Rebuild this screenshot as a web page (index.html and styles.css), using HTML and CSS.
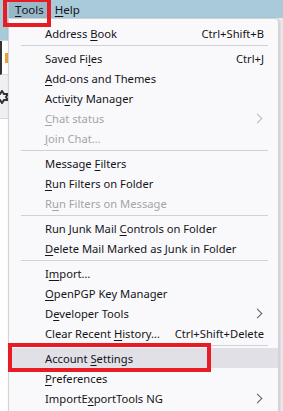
FILE: index.html
```html
<!DOCTYPE html>
<html lang="en">
<head>
  <meta charset="UTF-8">
  <title>Tools menu</title>
  <link rel="stylesheet" href="styles.css">
</head>
<body>
  <!-- menu bar -->
  <div class="menubar">
    <span class="menubar-item active"><u>T</u>ools</span>
    <span class="menubar-item"><u>H</u>elp</span>
  </div>

  <!-- window content behind the popup -->
  <div class="window">
    <div class="win-left">
      <div class="strip tabrow"></div>
      <div class="strip addr"><span class="orange"></span></div>
      <div class="strip toolbar">
        <svg class="gear" width="14" height="14" viewBox="0 0 14 14">
          <path d="M7 1 L9 4 L13 4 L11 7 L13 10 L9 10 L7 13 L5 10 L1 10 L3 7 L1 4 L5 4 Z" fill="none" stroke="#333" stroke-width="2"/>
        </svg>
      </div>
      <div class="strip blank"></div>
    </div>
    <div class="win-right"></div>
  </div>

  <!-- Tools popup -->
  <div class="menu">
    <div class="menu-item"><span>Address <u>B</u>ook</span><span class="key">Ctrl+Shift+B</span></div>
    <div class="menu-sep"></div>
    <div class="menu-item"><span>Saved Fi<u>l</u>es</span><span class="key">Ctrl+J</span></div>
    <div class="menu-item"><span><u>A</u>dd-ons and Themes</span></div>
    <div class="menu-item"><span>Acti<u>v</u>ity Manager</span></div>
    <div class="menu-item disabled"><span><u>C</u>hat status</span><span class="arrow"></span></div>
    <div class="menu-item disabled"><span><u>J</u>oin Chat…</span></div>
    <div class="menu-sep"></div>
    <div class="menu-item"><span>Message <u>F</u>ilters</span></div>
    <div class="menu-item"><span><u>R</u>un Filters on Folder</span></div>
    <div class="menu-item disabled"><span>R<u>u</u>n Filters on Message</span></div>
    <div class="menu-sep"></div>
    <div class="menu-item"><span>Run Junk Mail <u>C</u>ontrols on Folder</span></div>
    <div class="menu-item"><span><u>D</u>elete Mail Marked as Junk in Folder</span></div>
    <div class="menu-sep"></div>
    <div class="menu-item"><span>I<u>m</u>port…</span></div>
    <div class="menu-item"><span><u>O</u>penPGP Key Manager</span></div>
    <div class="menu-item"><span>D<u>e</u>veloper Tools</span><span class="arrow"></span></div>
    <div class="menu-item"><span>Clear Recent <u>H</u>istory…</span><span class="key">Ctrl+Shift+Delete</span></div>
    <div class="menu-sep"></div>
    <div class="menu-item hover"><span>Account <u>S</u>ettings</span></div>
    <div class="menu-item"><span><u>P</u>references</span></div>
    <div class="menu-item"><span>ImportE<u>x</u>portTools NG</span><span class="arrow"></span></div>
  </div>

  <!-- annotation boxes -->
  <div class="mark mark-tools"></div>
  <div class="mark mark-account"></div>
</body>
</html>
```

FILE: styles.css
```css
body {
  margin: 0;
  width: 283px;
  height: 411px;
  overflow: hidden;
  position: relative;
  font-family: "Noto Sans", "Segoe UI", sans-serif;
  font-size: 11.2px;
  color: #15141a;
  background: #fff;
}
u {
  text-decoration: underline;
  text-underline-offset: 2px;
}

/* menu bar */
.menubar {
  height: 18px;
  background: #a8cad9;
  display: flex;
  align-items: stretch;
  padding-left: 9px;
}
.menubar-item {
  display: flex;
  align-items: center;
  padding: 0 6px;
  font-size: 11.5px;
}
.menubar-item.active {
  background: #98b8c8;
  padding: 0 5px 0 6px;
}

/* window behind */
.window {
  display: flex;
  height: 393px;
}
.win-left {
  width: 8px;
  display: flex;
  flex-direction: column;
  overflow: hidden;
}
.strip {
  display: flex;
  align-items: center;
  overflow: hidden;
}
.tabrow {
  height: 22px;
  background: #a8cad9;
  border-bottom: 1px solid #c8d8e0;
}
.addr {
  height: 34px;
  background: #fff;
  border-bottom: 1px solid #d8d8d8;
  border-left: 2px solid #333;
  box-sizing: border-box;
  padding-left: 3px;
}
.orange {
  display: inline-block;
  width: 3px;
  height: 10px;
  background: #e8a23a;
}
.toolbar {
  height: 43px;
  background: #f0f0f2;
  border-bottom: 1px solid #d8d8d8;
}
.gear {
  flex: none;
  margin-left: -5px;
}
.blank {
  flex: 1;
  background: #fff;
}
.win-right {
  flex: 1;
  background: #ebebef;
}

/* popup menu */
.menu {
  position: absolute;
  left: 8px;
  top: 18px;
  width: 269px;
  height: 400px;
  padding-top: 4px;
  background: #f9f9fb;
  border: 1px solid #d4d4d8;
  border-radius: 0 4px 0 0;
  box-shadow: 1px 1px 3px rgba(0, 0, 0, 0.15);
}
.menu-item {
  height: 20px;
  display: flex;
  align-items: center;
  justify-content: space-between;
  padding: 0 14px 0 36px;
}
.menu-item.disabled {
  color: #a4a4a8;
}
.menu-item.hover {
  background: #e0e0e6;
}
.arrow {
  width: 6px;
  height: 6px;
  border-top: 1.5px solid #5b5b66;
  border-right: 1.5px solid #5b5b66;
  transform: rotate(45deg);
  margin-right: 3px;
}
.disabled .arrow {
  border-color: #b8b8bc;
}
.menu-sep {
  height: 1px;
  margin: 2px 10px 2px 12px;
  background: #d0d0d7;
}

/* red annotation boxes */
.mark {
  position: absolute;
  border: 4px solid #e81c24;
}
.mark-tools {
  left: 3px;
  top: -2px;
  width: 40px;
  height: 21px;
}
.mark-account {
  left: 8px;
  top: 343px;
  width: 195px;
  height: 21px;
}
```
